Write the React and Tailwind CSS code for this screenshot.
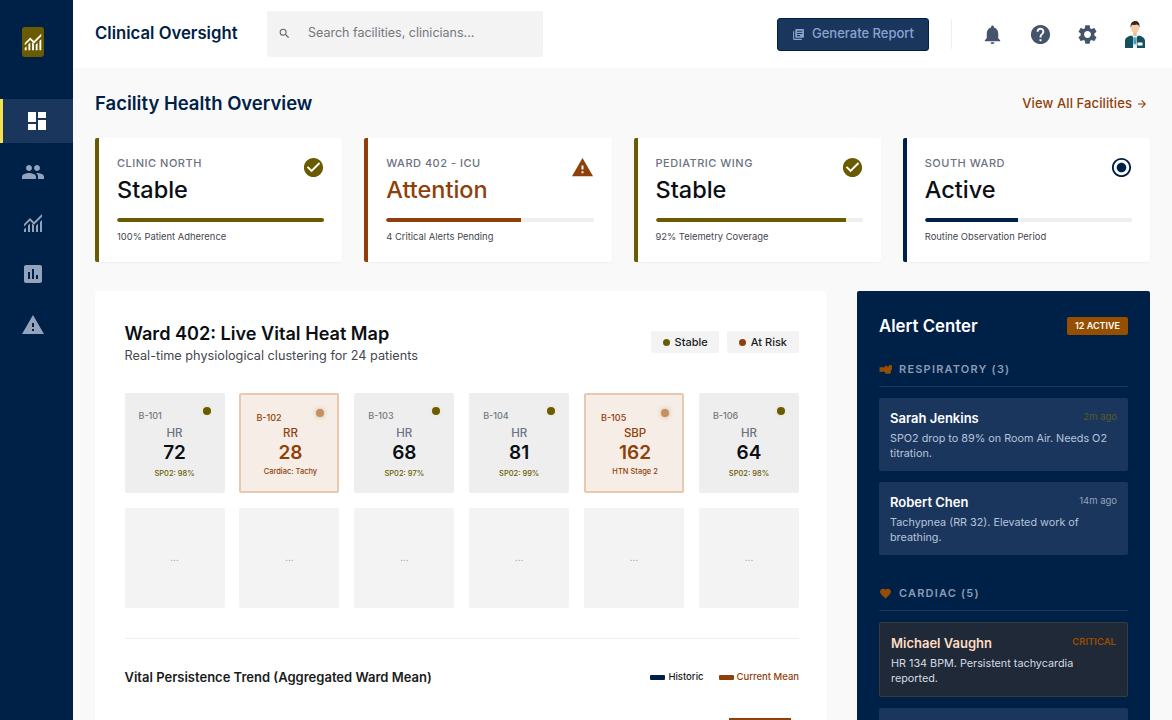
import React from "react";
import {
  MdDashboard, MdGroup, MdAssessment, MdWarning, MdNotifications, MdHelp, MdSettings,
  MdLibraryBooks, MdSearch, MdCheckCircle, MdRadioButtonChecked, MdArrowForward, MdFavorite,
} from "react-icons/md";

function Monitoring({ className }) {
  return (
    <svg viewBox="0 0 24 24" className={className} fill="currentColor">
      <path d="M3 21v-2.500l2-2V21H3zm4 0v-6.500l2-2V21H7zm4 0v-8.500l2 1.800V21h-2zm4 0v-6.200l2-2V21h-2zm4 0V11l2-2v12h-2z" />
      <path d="M3 15.500V13l6-6 4 4 8-8v2.800l-8 8-4-4z" />
    </svg>
  );
}

function Lungs({ className }) {
  return (
    <svg viewBox="0 0 24 24" className={className} fill="currentColor">
      <path d="M1 8h10V5h4v2h3V3.500h3.500A2.500 2.500 0 0 1 24 6v5a2.500 2.500 0 0 1-2 2.400V17a3 3 0 0 1-3 3h-6a2 2 0 0 1-2-2v-2H1z" />
    </svg>
  );
}

function Avatar({ className }) {
  return (
    <svg viewBox="0 0 20 27" className={className}>
      <path d="M0 27v-7c0-3 2.500-4.500 6-5.500l4 1.500 4-1.500c3.500 1 6 2.500 6 5.500v7z" fill="#14505f" />
      <path d="M7 14h6l-1.500 3 .5 10H8l.5-10z" fill="#f1f5f6" />
      <path d="M9.400 16h1.200l.6 6-1.200 2-1.200-2z" fill="#2b9fc0" />
      <rect x="8.300" y="10" width="3.400" height="5" fill="#eab98f" />
      <ellipse cx="10" cy="7" rx="4" ry="5" fill="#f6cba6" />
      <path d="M5.700 7C5 2 7.300 0 10.500 0c2.800 0 4.500 2 3.900 7-.4-2-1-3-2.200-3.400-2 .6-3.800.4-5 .2C6.500 4.500 6 5.500 5.700 7z" fill="#3f2516" />
      <rect x="12.500" y="21.500" width="5" height="3" fill="#ffffff" />
    </svg>
  );
}

function SideItem({ icon: Icon, active }) {
  return (
    <div className={`h-[44px] flex items-center mb-[7px] ${active ? "bg-[#1b365d] border-l-[3px] border-l-[#f5e050] text-white pl-[22px]" : "text-[#94a3bd] pl-[21px]"}`}>
      <Icon className="w-[24px] h-[24px]" />
    </div>
  );
}

const cards = [
  { label: "CLINIC NORTH", status: "Stable", note: "100% Patient Adherence", pct: "100%", bar: "bg-[#6b5b00]", left: "border-l-[#6b5b00]", text: "text-[#0b0f14]", icon: "check" },
  { label: "WARD 402 - ICU", status: "Attention", note: "4 Critical Alerts Pending", pct: "65%", bar: "bg-[#8f3f0a]", left: "border-l-[#8f3f0a]", text: "text-[#8f3f0a]", icon: "warn" },
  { label: "PEDIATRIC WING", status: "Stable", note: "92% Telemetry Coverage", pct: "92%", bar: "bg-[#6b5b00]", left: "border-l-[#6b5b00]", text: "text-[#0b0f14]", icon: "check" },
  { label: "SOUTH WARD", status: "Active", note: "Routine Observation Period", pct: "45%", bar: "bg-[#002147]", left: "border-l-[#002147]", text: "text-[#0b0f14]", icon: "radio" },
];

function Card({ c }) {
  return (
    <div className={`bg-white rounded-[2px] border-l-[4px] ${c.left} h-[124px] pl-[18px] pr-[18px] pt-[18px] shadow-[0_1px_2px_rgba(0,0,0,0.04)]`}>
      <div className="flex justify-between items-start">
        <div>
          <div className="text-[11px] leading-[15px] tracking-[0.5px] text-[#6b7280] font-medium">{c.label}</div>
          <div className={`text-[23.500px] leading-[32px] mt-[3px] font-medium ${c.text}`}>{c.status}</div>
        </div>
        <div className="mr-[-1px]">
          {c.icon === "check" && <MdCheckCircle className="w-[23px] h-[23px] text-[#6b5b00]" />}
          {c.icon === "warn" && <MdWarning className="w-[23px] h-[23px] text-[#8f3f0a] mr-[1px]" />}
          {c.icon === "radio" && <MdRadioButtonChecked className="w-[23px] h-[23px] text-[#002147]" />}
        </div>
      </div>
      <div className="h-[4px] bg-[#eeeeee] rounded-full mt-[12px] overflow-hidden">
        <div className={`h-full ${c.bar} rounded-l-full`} style={{ width: c.pct }} />
      </div>
      <div className="text-[9.400px] leading-[12px] text-[#44474e] mt-[9px]">{c.note}</div>
    </div>
  );
}

function Tile({ bed, name, val, foot, risk }) {
  if (risk) {
    return (
      <div className="h-[100px] bg-[#f5ede6] border-2 border-[#e6c9ae] rounded-[2px] pl-[15px] pr-[13px] pt-[15px] flex flex-col items-center">
        <div className="w-full flex justify-between items-start">
          <span className="text-[9px] leading-[12px] mt-[2px] text-[#8f3f0a] font-medium">{bed}</span>
          <span className="w-[8px] h-[8px] rounded-full mt-[-1px] bg-[#c49060] shadow-[0_0_4px_rgba(192,140,92,0.6)]" />
        </div>
        <span className="text-[11.500px] leading-[14px] mt-[2px] text-[#8f3f0a] font-medium">{name}</span>
        <span className="text-[19px] leading-[24px] mt-[1px] font-semibold text-[#8f3f0a]">{val}</span>
        <span className="text-[7.500px] leading-[10px] mt-[2px] font-medium text-[#8f3f0a]">{foot}</span>
      </div>
    );
  }
  return (
    <div className="h-[100px] bg-[#eeeeee] rounded-[2px] px-[14px] pt-[15px] flex flex-col items-center">
      <div className="w-full flex justify-between items-start">
        <span className="text-[9px] leading-[12px] mt-[2px] text-[#74777f] font-medium">{bed}</span>
        <span className="w-[8px] h-[8px] rounded-full mt-[-1px] bg-[#6b5b00] shadow-[0_0_3px_rgba(220,200,60,0.3)]" />
      </div>
      <span className="text-[11.500px] leading-[14px] mt-[4px] text-[#6b7280] font-medium">{name}</span>
      <span className="text-[19px] leading-[24px] mt-[1px] font-semibold text-[#0b0f14]">{val}</span>
      <span className="text-[7.500px] leading-[10px] mt-[4px] font-medium text-[#6b5b00]">{foot}</span>
    </div>
  );
}

function Alert({ name, time, timeCls, body, critical }) {
  return (
    <div className={`rounded-[2px] px-[11px] pt-[11px] pb-[10px] mb-[11px] ${critical ? "bg-[#1f2937] border border-[#3a3a3a]" : "bg-[#1b365d]"}`}>
      <div className="flex justify-between items-start">
        <span className={`text-[13px] leading-[18px] font-semibold ${critical ? "text-[#ffdcc3]" : "text-white"}`}>{name}</span>
        <span className={`text-[9.500px] leading-[12px] mt-[2px] ${timeCls}`}>{time}</span>
      </div>
      <p className={`text-[10.800px] leading-[15px] mt-[4px] ${critical ? "text-[#d6dbe3]" : "text-[#b6c4dc]"}`}>{body}</p>
    </div>
  );
}

export default function App() {
  return (
    <div className="w-[1172px] h-[720px] overflow-hidden flex bg-[#f9f9f9] font-['Inter',sans-serif]">
      <aside className="w-[73px] shrink-0 bg-[#002147] flex flex-col">
        <div className="h-[99px] pl-[22px] pt-[27px]">
          <div className="w-[22px] h-[30px] rounded-[3px] bg-[#6b5b00] flex items-center justify-center text-white">
            <Monitoring className="w-[22px] h-[22px] shrink-0" />
          </div>
        </div>
        <SideItem icon={MdDashboard} active />
        <SideItem icon={MdGroup} />
        <SideItem icon={Monitoring} />
        <SideItem icon={MdAssessment} />
        <SideItem icon={MdWarning} />
      </aside>

      <div className="flex-1 min-w-0 flex flex-col">
        <header className="h-[68px] shrink-0 bg-white flex items-center pl-[22px] pr-[22px]">
          <h1 className="text-[16.700px] font-semibold text-[#002147] w-[172px] whitespace-nowrap">Clinical Oversight</h1>
          <div className="w-[276px] h-[46px] bg-[#f3f3f3] rounded-[2px] flex items-center pl-[11px] text-[#74777f]">
            <MdSearch className="w-[13px] h-[13px] text-[#5f6672] mt-[-1px]" />
            <span className="ml-[17px] mt-[-1px] text-[12.500px] text-[#74777f]">Search facilities, clinicians...</span>
          </div>
          <div className="ml-auto flex items-center">
            <div className="w-[152px] h-[33px] bg-[#1b365d] border border-[#002147] rounded-[3px] flex items-center justify-center gap-[7px] text-[#8aa4cf]">
              <MdLibraryBooks className="w-[13px] h-[13px]" />
              <span className="text-[13px] font-medium">Generate Report</span>
            </div>
            <div className="w-px h-[30px] bg-[#eeeeee] ml-[22px] mr-[29px]" />
            <MdNotifications className="w-[23px] h-[23px] text-[#44546a]" />
            <MdHelp className="w-[23px] h-[23px] text-[#44546a] ml-[24.500px]" />
            <MdSettings className="w-[23px] h-[23px] text-[#44546a] ml-[24.500px]" />
            <Avatar className="w-[20px] h-[27px] ml-[26px] mr-[5px]" />
          </div>
        </header>

        <main className="flex-1 min-h-0 px-[22px] overflow-hidden">
          <div className="flex justify-between items-center h-[70px] pt-[2px]">
            <h2 className="text-[18.500px] font-semibold text-[#002147]">Facility Health Overview</h2>
            <div className="flex items-center gap-[4px] text-[#8f3f0a] text-[13px] tracking-[0.1px] font-medium mr-[2px]">
              View All Facilities <MdArrowForward className="w-[12px] h-[12px]" />
            </div>
          </div>

          <div className="grid grid-cols-4 gap-[22px]">
            {cards.map((c) => <Card key={c.label} c={c} />)}
          </div>

          <div className="flex gap-[30px] mt-[29px] items-start">
            <section className="w-[732px] shrink-0 bg-white rounded-[2px] pl-[29.500px] pr-[28px] pt-[30px] pb-[40px] shadow-[0_1px_2px_rgba(0,0,0,0.04)]">
              <div className="flex justify-between items-start">
                <div>
                  <h3 className="text-[18.100px] leading-[25px] font-semibold text-[#0b0f14]">Ward 402: Live Vital Heat Map</h3>
                  <p className="text-[12.700px] leading-[18px] mt-[1px] text-[#44474e]">Real-time physiological clustering for 24 patients</p>
                </div>
                <div className="flex gap-[7.500px] mt-[10px]">
                  <div className="h-[22px] px-[11.500px] bg-[#f3f3f3] rounded-[2px] flex items-center gap-[5px] text-[11px] font-medium text-[#1a1c1c]">
                    <span className="w-[7px] h-[7px] rounded-full bg-[#6b5b00]" />Stable
                  </div>
                  <div className="h-[22px] px-[12px] bg-[#f3f3f3] rounded-[2px] flex items-center gap-[5px] text-[11px] font-medium text-[#1a1c1c]">
                    <span className="w-[7px] h-[7px] rounded-full bg-[#8f3f0a]" />At Risk
                  </div>
                </div>
              </div>

              <div className="grid grid-cols-6 gap-[14.800px] mt-[28px]">
                <Tile bed="B-101" name="HR" val="72" foot="SP02: 98%" />
                <Tile bed="B-102" name="RR" val="28" foot="Cardiac: Tachy" risk />
                <Tile bed="B-103" name="HR" val="68" foot="SP02: 97%" />
                <Tile bed="B-104" name="HR" val="81" foot="SP02: 99%" />
                <Tile bed="B-105" name="SBP" val="162" foot="HTN Stage 2" risk />
                <Tile bed="B-106" name="HR" val="64" foot="SP02: 98%" />
                {[0, 1, 2, 3, 4, 5].map((i) => (
                  <div key={i} className="h-[100px] bg-[#f3f3f3] rounded-[2px] flex items-center justify-center text-[10px] text-[#9a9ca3]">...</div>
                ))}
              </div>

              <div className="h-px bg-[#eeeeee] mt-[30px]" />

              <div className="flex justify-between items-center mt-[29px]">
                <h4 className="text-[13px] font-semibold text-[#1a1c1c]">Vital Persistence Trend (Aggregated Ward Mean)</h4>
                <div className="flex items-center gap-[15px] text-[9.500px] font-medium">
                  <span className="flex items-center gap-[3px] text-[#1a1c1c]"><i className="w-[15px] h-[5px] rounded-[1px] bg-[#002147]" />Historic</span>
                  <span className="flex items-center gap-[3px] text-[#8f3f0a]"><i className="w-[15px] h-[5px] rounded-[1px] bg-[#8f3f0a]" />Current Mean</span>
                </div>
              </div>

              <div className="flex justify-end mt-[31px] pr-[8px]">
                <div className="w-[62px] h-[20px] bg-[#8f3f0a]" />
              </div>
            </section>

            <aside className="w-[293px] shrink-0 bg-[#002147] rounded-[2px] px-[22px] pt-[25px] pb-[20px] h-[500px]">
              <div className="flex justify-between items-center">
                <h3 className="text-[16.800px] leading-[20px] font-semibold text-white">Alert Center</h3>
                <span className="h-[18px] px-[8px] bg-[#964f00] rounded-[2px] flex items-center text-[9px] font-semibold text-white">12 ACTIVE</span>
              </div>
              <div className="flex items-center gap-[7px] mt-[26px] pb-[10px] border-b border-[#1b365d]">
                <Lungs className="w-[13px] h-[13px] text-[#964f00]" />
                <span className="text-[11px] leading-[14px] font-semibold tracking-[1.200px] text-[#8a9ab5]">RESPIRATORY (3)</span>
              </div>
              <div className="mt-[11px]">
                <Alert name="Sarah Jenkins" time="2m ago" timeCls="text-[#5a5a1e]" body="SPO2 drop to 89% on Room Air. Needs O2 titration." />
                <Alert name="Robert Chen" time="14m ago" timeCls="text-[#94a3bd]" body="Tachypnea (RR 32). Elevated work of breathing." />
              </div>
              <div className="flex items-center gap-[7px] mt-[31px] pb-[10px] border-b border-[#1b365d]">
                <MdFavorite className="w-[13px] h-[13px] text-[#964f00]" />
                <span className="text-[11px] leading-[14px] font-semibold tracking-[1.200px] text-[#8a9ab5]">CARDIAC (5)</span>
              </div>
              <div className="mt-[11px]">
                <Alert name="Michael Vaughn" time="CRITICAL" timeCls="text-[#964f00] font-semibold" body="HR 134 BPM. Persistent tachycardia reported." critical />
                <div className="h-[60px] rounded-[2px] bg-[#1b365d]" />
              </div>
            </aside>
          </div>
        </main>
      </div>
    </div>
  );
}
